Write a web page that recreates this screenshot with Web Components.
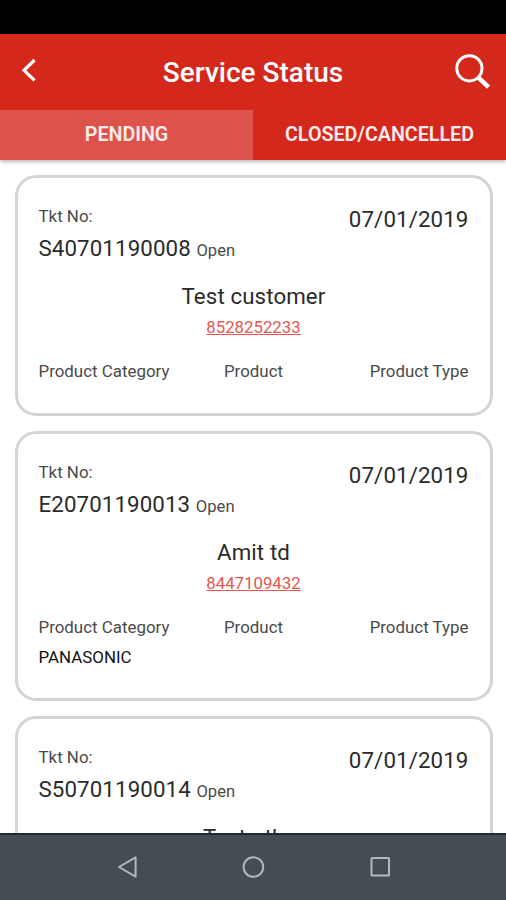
<!DOCTYPE html>
<html lang="en">
<head>
<meta charset="utf-8">
<title>Service Status</title>
<style>
  html, body { margin:0; height:100%; overflow:hidden; background:#fff; }
</style>
</head>
<body>
<service-screen></service-screen>

<script>
(() => {
  class ServiceScreen extends HTMLElement {
    constructor() {
      super();
      this.attachShadow({ mode: 'open' }).innerHTML = `
        <style>
          :host{
            display:flex; flex-direction:column;
            height:100vh; overflow:hidden;
            background:#fff; color:#2b2b2b;
            font-family:Roboto,"Liberation Sans",sans-serif;
          }
          .status{ flex:none; height:34px; background:#000; }
          app-header, nav-bar{ flex:none; }
          .list{
            flex:1; min-height:0; overflow:hidden;
            display:flex; flex-direction:column; gap:15px;
            padding:15px 13.5px 0 14.5px;
          }
        </style>
        <div class="status"></div>
        <app-header>
          Service Status
          <tab-item slot="tabs" active>PENDING</tab-item>
          <tab-item slot="tabs">CLOSED/CANCELLED</tab-item>
        </app-header>
        <div class="list">
          <ticket-card number="S40701190008" status="Open" date="07/01/2019" customer="Test customer" phone="8528252233"></ticket-card>
          <ticket-card number="E20701190013" status="Open" date="07/01/2019" customer="Amit td" phone="8447109432" category="PANASONIC"></ticket-card>
          <ticket-card number="S50701190014" status="Open" date="07/01/2019" customer="Test other"></ticket-card>
        </div>
        <nav-bar></nav-bar>
      `;
    }
  }

  class AppHeader extends HTMLElement {
    constructor() {
      super();
      this.attachShadow({ mode: 'open' }).innerHTML = `
        <style>
          :host{
            display:block; position:relative; z-index:1;
            background:#d4281d; color:#fff;
            box-shadow:0 2px 4px rgba(0,0,0,.28);
          }
          .bar{
            display:grid; grid-template-columns:60px 1fr 60px;
            align-items:center; height:76px;
          }
          h1{ margin:2px 0 0; font-size:28px; font-weight:500; line-height:32px; text-align:center; white-space:nowrap; }
          svg{ display:block; fill:none; stroke:#fff; }
          .back{ margin:-4px 0 0 20px; }
          .search{ margin:-1px 0 0 8px; }
          .tabs{ display:flex; height:50px; }
        </style>
        <div class="bar">
          <svg class="back" width="18" height="24" viewBox="0 0 18 24" stroke-width="3.2"><path d="M14.6 2 4 12.3 14.6 22.4"/></svg>
          <h1><slot></slot></h1>
          <svg class="search" width="38" height="38" viewBox="0 0 38 38" stroke-width="3"><circle cx="15.4" cy="15.3" r="12.6"/><path d="M23.6 23.8 34.6 34.2" stroke-width="4.6"/></svg>
        </div>
        <div class="tabs"><slot name="tabs"></slot></div>
      `;
    }
  }

  class TabItem extends HTMLElement {
    constructor() {
      super();
      this.attachShadow({ mode: 'open' }).innerHTML = `
        <style>
          :host{
            flex:1 1 0; display:flex; align-items:center; justify-content:center;
            box-sizing:border-box; padding-bottom:2px;
            font-size:19.7px; font-weight:600; color:#fdeceb;
          }
          :host([active]){ background:#dd524a; }
        </style>
        <slot></slot>
      `;
    }
  }

  class TicketCard extends HTMLElement {
    constructor() {
      super();
      this.attachShadow({ mode: 'open' });
    }

    connectedCallback() {
      const get = name => this.getAttribute(name) || '';
      const phone = get('phone');
      const category = get('category');

      this.shadowRoot.innerHTML = `
        <style>
          :host{
            flex:none; display:block; box-sizing:border-box;
            border:3px solid #d4d4d4; border-radius:21px;
            padding:28px 21px 32px;
          }
          .top{ display:flex; justify-content:space-between; align-items:flex-start; }
          .label, .state, .fields{ font-size:16.9px; line-height:20px; color:#4a4a4a; }
          .number, .date, .name{ font-size:22.3px; line-height:26px; letter-spacing:.1px; color:#2b2b2b; }
          .number{ margin-top:9px; }
          .state{ font-size:16.6px; letter-spacing:0; }
          .name{ margin-top:22px; text-align:center; }
          .phone{
            display:block; margin-top:8px; height:20px;
            font-size:16.8px; line-height:20px; text-align:center;
            color:#e5574f; text-decoration:underline;
          }
          .fields{ display:grid; grid-template-columns:1fr 1fr 1fr; margin-top:24px; }
          .fields :nth-child(2){ text-align:center; }
          .fields :nth-child(3){ text-align:right; }
          .value{ margin-top:11px; font-size:16.9px; line-height:18px; color:#111; }
        </style>
        <div class="top">
          <div>
            <div class="label">Tkt No:</div>
            <div class="number">${get('number')} <span class="state">${get('status')}</span></div>
          </div>
          <div class="date">${get('date')}</div>
        </div>
        <div class="name">${get('customer')}</div>
        ${phone ? `
          <a class="phone">${phone}</a>
          <div class="fields">
            <span>Product Category</span>
            <span>Product</span>
            <span>Product Type</span>
          </div>
        ` : ''}
        ${category ? `<div class="value">${category}</div>` : ''}
      `;
    }
  }

  class NavBar extends HTMLElement {
    constructor() {
      super();
      this.attachShadow({ mode: 'open' }).innerHTML = `
        <style>
          :host{
            display:flex; justify-content:center; align-items:center; gap:102.5px;
            box-sizing:border-box; height:67px; padding-bottom:2px;
            background:#454c52; border-top:2px solid #1d2d2f;
          }
          svg{ display:block; fill:none; stroke:#b2b8bb; stroke-width:2; stroke-linejoin:round; }
        </style>
        <svg width="24" height="24" viewBox="0 0 24 24"><path d="M20.6 2.4V21.6L4 12Z"/></svg>
        <svg width="24" height="24" viewBox="0 0 24 24"><circle cx="12.4" cy="12" r="9.8"/></svg>
        <svg width="24" height="24" viewBox="0 0 24 24"><rect x="3.5" y="3" width="17.5" height="17.6" rx=".6"/></svg>
      `;
    }
  }

  customElements.define('tab-item', TabItem);
  customElements.define('app-header', AppHeader);
  customElements.define('ticket-card', TicketCard);
  customElements.define('nav-bar', NavBar);
  customElements.define('service-screen', ServiceScreen);
})();
</script>
</body>
</html>
